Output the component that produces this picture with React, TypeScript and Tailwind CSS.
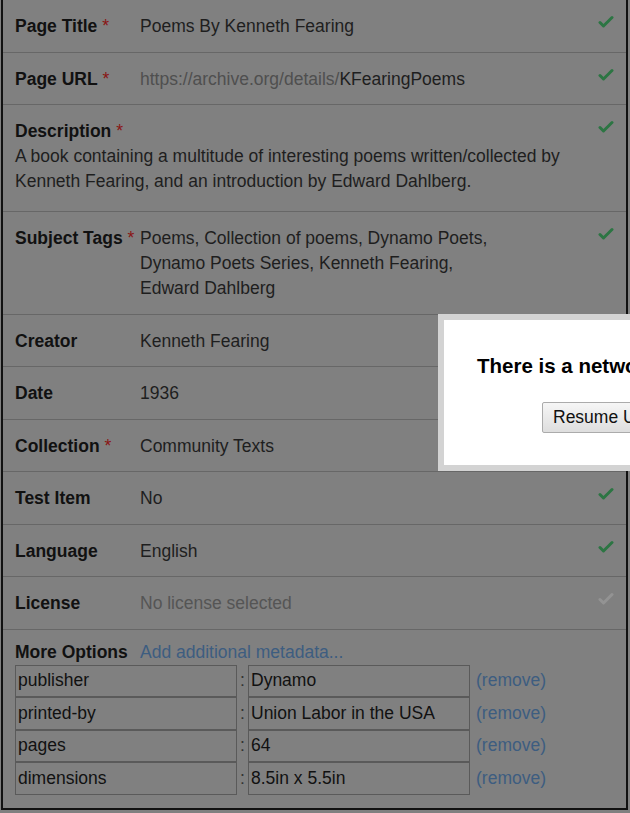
import React from 'react';

interface Field {
  label: string;
  required?: boolean;
  value: React.ReactNode;
  check?: 'ok' | 'off' | null;
  stacked?: boolean;
}

const Check = ({ faded }: { faded?: boolean }) => (
  <svg width="16" height="14" viewBox="0 0 16 14" className="mt-[1px]">
    <path
      d="M2 7.5 L5.5 11 L14 2.5"
      fill="none"
      stroke={faded ? '#939393' : '#2c7543'}
      strokeWidth="3"
      strokeLinecap="round"
      strokeLinejoin="round"
    />
  </svg>
);

const fields: Field[] = [
  { label: 'Page Title', required: true, value: 'Poems By Kenneth Fearing', check: 'ok' },
  {
    label: 'Page URL',
    required: true,
    value: (
      <>
        <span className="text-[#4f4f4f]">https://archive.org/details/</span>KFearingPoems
      </>
    ),
    check: 'ok',
  },
  {
    label: 'Description',
    required: true,
    stacked: true,
    value:
      'A book containing a multitude of interesting poems written/collected by Kenneth Fearing, and an introduction by Edward Dahlberg.',
    check: 'ok',
  },
  {
    label: 'Subject Tags',
    required: true,
    value: (
      <span className="block w-[360px]">
        Poems, Collection of poems, Dynamo Poets, Dynamo Poets Series, Kenneth Fearing, Edward Dahlberg
      </span>
    ),
    check: 'ok',
  },
  { label: 'Creator', value: 'Kenneth Fearing' },
  { label: 'Date', value: '1936' },
  { label: 'Collection', required: true, value: 'Community Texts' },
  { label: 'Test Item', value: 'No', check: 'ok' },
  { label: 'Language', value: 'English', check: 'ok' },
  {
    label: 'License',
    value: <span className="text-[#555]">No license selected</span>,
    check: 'off',
  },
];

const extras = [
  ['publisher', 'Dynamo'],
  ['printed-by', 'Union Labor in the USA'],
  ['pages', '64'],
  ['dimensions', '8.5in x 5.5in'],
];

function Label({ text, required }: { text: string; required?: boolean }) {
  return (
    <span className="font-bold text-[#111]">
      {text}
      {required && <span className="font-normal text-[#8a1414]"> *</span>}
    </span>
  );
}

export default function App() {
  return (
    <div className="relative h-[813px] w-[630px] overflow-hidden bg-[#808080] font-['Liberation_Sans',Arial,sans-serif] text-[17.5px] leading-[25px] text-[#1e1e1e]">
      <div className="ml-[1px] w-[627px] border-x-2 border-b-2 border-[#111]">
        {fields.map((f) => (
          <div
            key={f.label}
            className={`flex items-start border-b border-[#676767] pl-[12px] pr-[12px] pt-[14px] ${
              f.stacked ? 'pb-[17px]' : 'pb-[12.5px]'
            }`}
          >
            {f.stacked ? (
              <div className="flex-1">
                <Label text={f.label} required={f.required} />
                <p>{f.value}</p>
              </div>
            ) : (
              <>
                <div className="w-[125px] shrink-0">
                  <Label text={f.label} required={f.required} />
                </div>
                <div className="flex-1">{f.value}</div>
              </>
            )}
            <div className="w-[16px] shrink-0">
              {f.check === 'ok' && <Check />}
              {f.check === 'off' && <Check faded />}
            </div>
          </div>
        ))}

        {/* More Options */}
        <div className="pl-[12px] pr-[10px] pt-[10px] pb-[13px]">
          <div className="flex">
            <div className="w-[125px] shrink-0">
              <Label text="More Options" />
            </div>
            <span className="text-[#3d5d80]">Add additional metadata...</span>
          </div>
          {extras.map(([k, v]) => (
            <div key={k} className="flex h-[32.5px] items-stretch">
              <div className="flex w-[222px] items-center border border-[#5a5a5a] pl-[2px] text-[#111]">
                {k}
              </div>
              <span className="flex w-[11px] items-center justify-center text-[#333]">:</span>
              <div className="flex w-[222px] items-center border border-[#5a5a5a] pl-[2px] text-[#111]">
                {v}
              </div>
              <span className="ml-[6px] flex items-center text-[#3d5d80]">(remove)</span>
            </div>
          ))}
        </div>
      </div>

      {/* network error dialog */}
      <div className="absolute left-[438px] top-[314px] h-[157px] w-[420px] border-[6px] border-[#d3d3d3] bg-white">
        <p className="whitespace-nowrap pl-[33px] pt-[32px] text-[20.5px] font-bold leading-[28px] text-black">
          There is a network error.
        </p>
        <button className="ml-[98px] mt-[22px] h-[31px] whitespace-nowrap rounded-[2px] border border-[#ababab] bg-gradient-to-b from-[#f6f6f6] to-[#dedede] px-[10px] text-[17.5px] text-[#111]">
          Resume Upload
        </button>
      </div>
    </div>
  );
}
